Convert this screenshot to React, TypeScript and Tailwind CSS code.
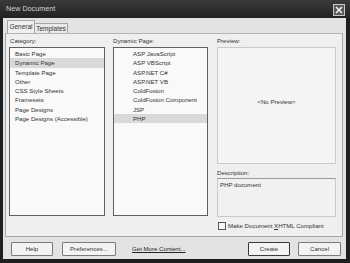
import React from "react"

const categories = [
  "Basic Page",
  "Dynamic Page",
  "Template Page",
  "Other",
  "CSS Style Sheets",
  "Framesets",
  "Page Designs",
  "Page Designs (Accessible)",
]

const dynamicPages = [
  "ASP JavaScript",
  "ASP VBScript",
  "ASP.NET C#",
  "ASP.NET VB",
  "ColdFusion",
  "ColdFusion Component",
  "JSP",
  "PHP",
]

function ListBox({ items, selected, indent }: { items: string[]; selected: string; indent: string }) {
  return (
    <div className="flex-1 border border-[#5f5f5f] bg-[#f9f9f9] pt-[1px]">
      {items.map((item) => (
        <div
          key={item}
          className={
            "h-[9.3px] leading-[9.3px] whitespace-nowrap " +
            indent +
            (item === selected ? " bg-[#d9d9d9]" : "")
          }
        >
          {item}
        </div>
      ))}
    </div>
  )
}

function Btn({ label, primary = false }: { label: string; primary?: boolean }) {
  return (
    <div
      className={
        "h-[14px] flex items-center justify-center rounded-[1px] bg-[#f3f3f3] " +
        (primary ? "border-[1.5px] border-[#3a3a3a]" : "border border-[#7a7a7a]")
      }
    >
      {label}
    </div>
  )
}

export default function App() {
  return (
    <div
      className="w-[350px] h-[263px] flex flex-col bg-[#1f1f1f] text-[6.1px] text-[#333]"
      style={{ fontFamily: '"Liberation Sans", Arial, sans-serif' }}
    >
      {/* Title bar */}
      <div className="h-[18px] flex items-center justify-between pl-[6px] pr-[5px] bg-gradient-to-b from-[#3a3a3a] to-[#222]">
        <span className="text-[7.2px] text-[#d4d4d4]">New Document</span>
        <div className="w-[12px] h-[12px] mt-[1px] border border-[#c8c8c8] bg-[#5a5a5a] flex items-center justify-center">
          <svg width="8" height="8" viewBox="0 0 8 8">
            <path d="M1 1 L7 7 M7 1 L1 7" stroke="#f0f0f0" strokeWidth="1.6" />
          </svg>
        </div>
      </div>

      {/* Body */}
      <div className="flex-1 flex flex-col ml-[3px] mr-[4px] mb-[4px] bg-[#e3e3e3]">
        {/* Tabs */}
        <div className="flex items-end h-[15px] pl-[4px] text-[6.5px]">
          <div className="w-[28px] h-[13px] flex items-center justify-center bg-[#efefef] border border-b-0 border-[#a5a5a5] rounded-t-[1px]">
            General
          </div>
          <div className="w-[33px] h-[10px] flex items-center justify-center bg-[#e9e9e9] border border-b-0 border-l-0 border-[#a5a5a5] rounded-t-[1px]">
            Templates
          </div>
        </div>

        {/* Tab panel */}
        <div className="h-[204px] ml-[2px] mr-[3px] flex flex-col bg-[#efefef] border border-[#a5a5a5] border-t-[#b5b5b5] px-[2px]">
          <div className="flex gap-[8px] pl-[1px] pt-[1px]">
            {/* Category */}
            <div className="w-[96px] flex flex-col">
              <div className="h-[12px] flex items-center pl-[1px]">Category:</div>
              <div className="h-[169px] flex">
                <ListBox items={categories} selected="Dynamic Page" indent="pl-[5px]" />
              </div>
            </div>
            {/* Dynamic page */}
            <div className="w-[95px] flex flex-col">
              <div className="h-[12px] flex items-center">Dynamic Page:</div>
              <div className="h-[169px] flex">
                <ListBox items={dynamicPages} selected="PHP" indent="pl-[19px]" />
              </div>
            </div>
            {/* Preview */}
            <div className="w-[119px] flex flex-col ml-[1px]">
              <div className="h-[12px] flex items-center">Preview:</div>
              <div className="h-[117px] flex items-center justify-center pb-[8px] border border-[#c9c9c9] bg-[#f4f4f4]">
                &lt;No Preview&gt;
              </div>
              <div className="h-[14px] flex items-center pt-[3px]">Description:</div>
              <div className="h-[39px] border border-[#c9c9c9] border-t-[#9a9a9a] bg-[#f1f1f1] pl-[2px] pt-[2px] leading-[8px]">
                PHP document
              </div>
              <div className="flex items-center gap-[2px] mt-[4px] pl-[1px]">
                <div className="w-[8px] h-[8px] border border-[#555] bg-[#f7f7f7]" />
                <span>
                  Make Document <span className="underline">X</span>HTML Compliant
                </span>
              </div>
            </div>
          </div>
        </div>

        {/* Bottom buttons */}
        <div className="flex items-center mt-[5px] pl-[8px] pr-[5px]">
          <div className="w-[42px]">
            <Btn label="Help" />
          </div>
          <div className="w-[54px] ml-[9px]">
            <Btn label="Preferences..." />
          </div>
          <span className="ml-[16px] underline text-[#222]">Get More Content...</span>
          <div className="flex-1" />
          <div className="w-[42px]">
            <Btn label="Create" primary />
          </div>
          <div className="w-[43px] ml-[8px]">
            <Btn label="Cancel" />
          </div>
        </div>
      </div>
    </div>
  )
}
